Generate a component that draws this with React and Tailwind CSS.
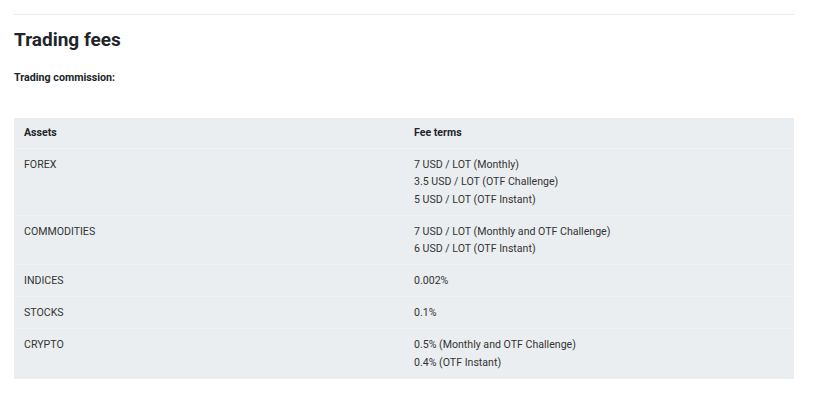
export default function App() {
  const rows = [
    { a: "FOREX", f: ["7 USD / LOT (Monthly)", "3.5 USD / LOT (OTF Challenge)", "5 USD / LOT (OTF Instant)"] },
    { a: "COMMODITIES", f: ["7 USD / LOT (Monthly and OTF Challenge)", "6 USD / LOT (OTF Instant)"] },
    { a: "INDICES", f: ["0.002%"] },
    { a: "STOCKS", f: ["0.1%"] },
    { a: "CRYPTO", f: ["0.5% (Monthly and OTF Challenge)", "0.4% (OTF Instant)"] },
  ];
  return (
    <div className="w-[825px] h-[395px] bg-white font-['Roboto',sans-serif] text-[#212529]">
      <div className="pl-[14px] pt-[14px]">
        <div className="w-[780px]">
          <div className="h-px bg-[#e9ecef]" />
          <h2 className="mt-[13px] text-[19px] leading-[23px] font-bold text-[#212529]">Trading fees</h2>
          <p className="mt-[18px] text-[10.7px] leading-[17px] font-bold text-[#212529]">Trading commission:</p>
          <div className="mt-[32px] bg-[#ebeef0] text-[10.6px] leading-[17.5px] pb-[1px]">
            <div className="grid grid-cols-2 py-[6px] font-bold">
              <div className="px-[10px]">Assets</div>
              <div className="px-[10px]">Fee terms</div>
            </div>
            {rows.map((r) => (
              <div key={r.a} className="grid grid-cols-2 border-t border-[#f0f2f3] pt-[7px] pb-[6.5px] text-[#333]">
                <div className="px-[10px]">{r.a}</div>
                <div className="px-[10px]">
                  {r.f.map((x) => (
                    <div key={x}>{x}</div>
                  ))}
                </div>
              </div>
            ))}
          </div>
        </div>
      </div>
    </div>
  );
}
